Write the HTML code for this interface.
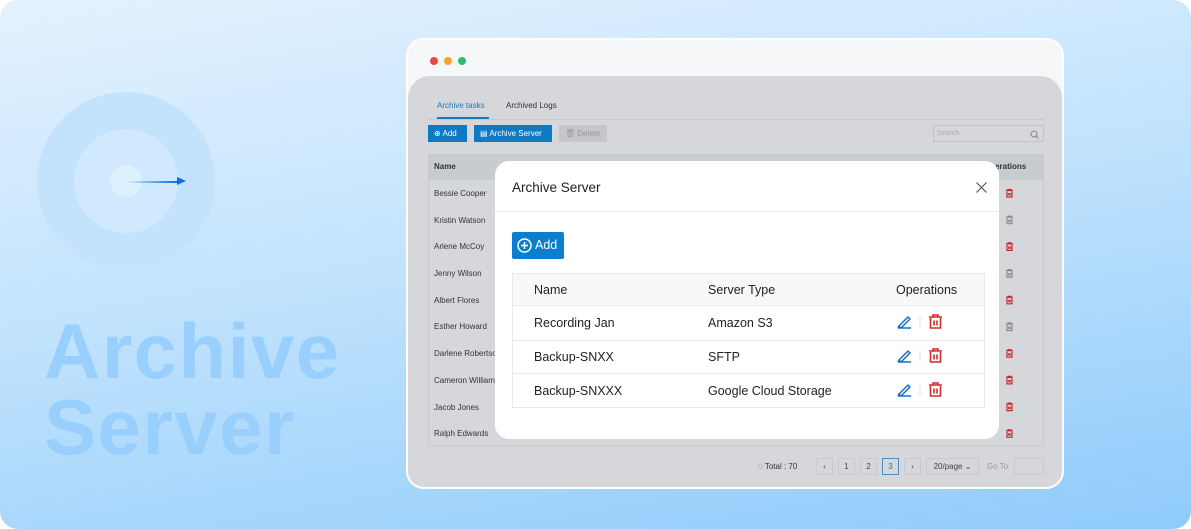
<!DOCTYPE html>
<html><head><style>
*{box-sizing:border-box;margin:0;padding:0}
body{width:1191px;height:529px;background:#fff;font-family:"Liberation Sans",sans-serif;overflow:hidden;position:relative}
.bg{position:absolute;left:0;top:0;width:1191px;height:529px;border-radius:18px;background:linear-gradient(170deg,#e4f2fe 0%,#c2e3fd 45%,#8fcbfb 100%);overflow:hidden}
.c{position:absolute;border-radius:50%}
.big{position:absolute;left:44px;font-weight:bold;font-size:78px;color:#99cffd;letter-spacing:1.5px;line-height:1}
.win{position:absolute;left:406px;top:38px;width:658px;height:451px;border-radius:18px;background:#f6f7f9;border:2px solid #fff;overflow:hidden}
.dot{position:absolute;top:17px;width:8px;height:8px;border-radius:50%}
.panel{position:absolute;left:0;top:36px;width:654px;height:420px;background:#d5d7db;border-radius:22px 22px 0 0}
.a{position:absolute;font-size:8px;color:#333;white-space:nowrap}
.btn{position:absolute;top:85px;height:17px;background:#0f79c4;color:#fff;font-size:8px;line-height:17px;padding-left:6px}
.row{position:absolute;left:20px;width:616px;border-bottom:1px solid #c8cbd0}
.modal{position:absolute;left:495px;top:161px;width:504px;height:278px;background:#fff;border-radius:14px}
.m{position:absolute;font-size:12.5px;color:#222;white-space:nowrap}
.pg{position:absolute;top:418px;height:17px;border:1px solid #c6c9ce;font-size:8px;color:#444;text-align:center;line-height:15px}
.t{position:absolute;left:596px}
</style></head><body>
<div class="bg">
 <div class="c" style="left:37px;top:92px;width:178px;height:178px;background:#c3e3fd"></div>
 <div class="c" style="left:74px;top:129px;width:104px;height:104px;background:#d0e9fe"></div>
 <div class="c" style="left:110px;top:165px;width:32px;height:32px;background:#ddf0fe"></div>
 <div style="position:absolute;left:126px;top:181px;width:52px;height:1.5px;background:linear-gradient(90deg,rgba(10,110,225,0),#0a6fe0)"></div>
 <div style="position:absolute;left:177px;top:177px;width:0;height:0;border-left:9px solid #0a6fe0;border-top:4.5px solid transparent;border-bottom:4.5px solid transparent"></div>
 <div class="big" style="top:312px">Archive</div>
 <div class="big" style="top:388px">Server</div>
</div>
<div class="win">
 <div class="dot" style="left:22px;background:#e9483c"></div>
 <div class="dot" style="left:36px;background:#f5a623"></div>
 <div class="dot" style="left:50px;background:#27c068"></div>
 <div class="panel">
  <div class="a" style="left:29px;top:25px;color:#1b78c0">Archive tasks</div>
  <div style="position:absolute;left:29px;top:41px;width:52px;height:2px;background:#1b78c0"></div>
  <div class="a" style="left:98px;top:25px">Archived Logs</div>
  <div style="position:absolute;left:20px;top:43px;width:616px;height:1px;background:#c5c8cc"></div>
 </div>
 <div class="btn" style="left:20px;width:39px">⊕ Add</div>
 <div class="btn" style="left:66px;width:78px">▤ Archive Server</div>
 <div class="btn" style="left:151px;width:48px;background:#c4c6ca;color:#999">🗑 Delete</div>
 <div style="position:absolute;left:525px;top:85px;width:111px;height:17px;border:1px solid #bfc2c6;font-size:7px;color:#aaa;padding:4px 3px">Search
  <svg style="position:absolute;right:4px;top:4px" width="9" height="9" viewBox="0 0 9 9"><circle cx="4" cy="4" r="3" fill="none" stroke="#888"/><path d="M6.2 6.2 8.5 8.5" stroke="#888"/></svg></div>
 <div style="position:absolute;left:20px;top:114px;width:616px;height:292px;border:1px solid #c6c9ce"></div>
 <div class="row" style="top:114px;height:26px;background:#c8cbd0"><span class="a" style="left:6px;top:8px;font-weight:bold">Name</span><span class="a" style="left:556px;top:8px;font-weight:bold">Operations</span></div>
 <div class="a" style="left:26px;top:149px">Bessie Cooper</div>
 <div class="a" style="left:26px;top:176px">Kristin Watson</div>
 <div class="a" style="left:26px;top:202px">Arlene McCoy</div>
 <div class="a" style="left:26px;top:229px">Jenny Wilson</div>
 <div class="a" style="left:26px;top:256px">Albert Flores</div>
 <div class="a" style="left:26px;top:282px">Esther Howard</div>
 <div class="a" style="left:26px;top:309px">Darlene Robertson</div>
 <div class="a" style="left:26px;top:336px">Cameron Williamson</div>
 <div class="a" style="left:26px;top:363px">Jacob Jones</div>
 <div class="a" style="left:26px;top:389px">Ralph Edwards</div>
 <svg class="t" style="top:148px" width="12" height="270" viewBox="0 0 12 270">
  <g id="tr" fill="none" stroke-width="1.2"><path d="M2 2.5 H9 M4 2.5 V1.5 H7 V2.5 M3 3.5 V9 H8 V3.5 M4.8 5 V7.5 M6.2 5 V7.5"/></g>
  <use href="#tr" stroke="#c0282c"/>
  <use href="#tr" y="26.7" stroke="#888"/>
  <use href="#tr" y="53.4" stroke="#c0282c"/>
  <use href="#tr" y="80.1" stroke="#888"/>
  <use href="#tr" y="106.8" stroke="#c0282c"/>
  <use href="#tr" y="133.5" stroke="#888"/>
  <use href="#tr" y="160.2" stroke="#c0282c"/>
  <use href="#tr" y="186.9" stroke="#c0282c"/>
  <use href="#tr" y="213.6" stroke="#c0282c"/>
  <use href="#tr" y="240.3" stroke="#c0282c"/>
 </svg>
 <div class="a" style="left:350px;top:422px">◌ Total : 70</div>
 <div class="pg" style="left:408px;width:17px">‹</div>
 <div class="pg" style="left:430px;width:17px">1</div>
 <div class="pg" style="left:452px;width:17px">2</div>
 <div class="pg" style="left:474px;width:17px;border-color:#4a8cc4;color:#1b78c0">3</div>
 <div class="pg" style="left:496px;width:17px">›</div>
 <div class="pg" style="left:518px;width:53px">20/page ⌄</div>
 <div class="a" style="left:579px;top:422px;color:#999">Go To</div>
 <div class="pg" style="left:606px;width:30px"></div>
</div>
<div class="modal">
 <div class="m" style="left:17px;top:19px;font-size:13.5px">Archive Server</div>
 <svg style="position:absolute;left:481px;top:21px" width="11" height="11" viewBox="0 0 11 11"><path d="M0.5 0.5 10.5 10.5 M10.5 0.5 0.5 10.5" stroke="#555" stroke-width="1.2"/></svg>
 <div style="position:absolute;left:0;top:50px;width:504px;height:1px;background:#eceef1"></div>
 <div style="position:absolute;left:17px;top:71px;width:52px;height:27px;background:#0a7fd0;border-radius:2px;color:#fff;font-size:12.5px;line-height:27px">
  <svg style="position:absolute;left:5px;top:6px" width="15" height="15" viewBox="0 0 15 15"><circle cx="7.5" cy="7.5" r="6.5" fill="none" stroke="#fff" stroke-width="1.5"/><path d="M7.5 4V11M4 7.5H11" stroke="#fff" stroke-width="1.5"/></svg>
  <span style="position:absolute;left:23px;top:0">Add</span></div>
 <div style="position:absolute;left:17px;top:112px;width:473px;height:135px;border:1px solid #e6e8eb"></div>
 <div style="position:absolute;left:18px;top:113px;width:471px;height:32px;background:#f7f8fa;border-bottom:1px solid #e6e8eb"></div>
 <div style="position:absolute;left:18px;top:179px;width:471px;height:1px;background:#e6e8eb"></div>
 <div style="position:absolute;left:18px;top:212px;width:471px;height:1px;background:#e6e8eb"></div>
 <div class="m" style="left:39px;top:122px">Name</div>
 <div class="m" style="left:213px;top:122px">Server Type</div>
 <div class="m" style="left:401px;top:122px">Operations</div>
 <div class="m" style="left:39px;top:155px">Recording Jan</div>
 <div class="m" style="left:213px;top:155px">Amazon S3</div>
 <div class="m" style="left:39px;top:189px">Backup-SNXX</div>
 <div class="m" style="left:213px;top:189px">SFTP</div>
 <div class="m" style="left:39px;top:223px">Backup-SNXXX</div>
 <div class="m" style="left:213px;top:223px">Google Cloud Storage</div>
 <svg style="position:absolute;left:400px;top:150px" width="56" height="110" viewBox="0 0 56 110">
  <g id="ic" fill="none">
   <path d="M4 15 L13 6 L15 8 L6 17 Z M3 17 L4 15 M3 17 H16" stroke="#1672c7" stroke-width="1.5" stroke-linejoin="round"/>
   <line x1="25" y1="6" x2="25" y2="16" stroke="#dde0e4"/>
   <path d="M34 6 H47 M38 6 V4 H43 V6 M35.5 7 V17 H45.5 V7 M39 9.5 V14.5 M42 9.5 V14.5" stroke="#d32a2f" stroke-width="1.6"/>
  </g>
  <use href="#ic" y="34"/>
  <use href="#ic" y="68"/>
 </svg>
</div>
</body></html>
